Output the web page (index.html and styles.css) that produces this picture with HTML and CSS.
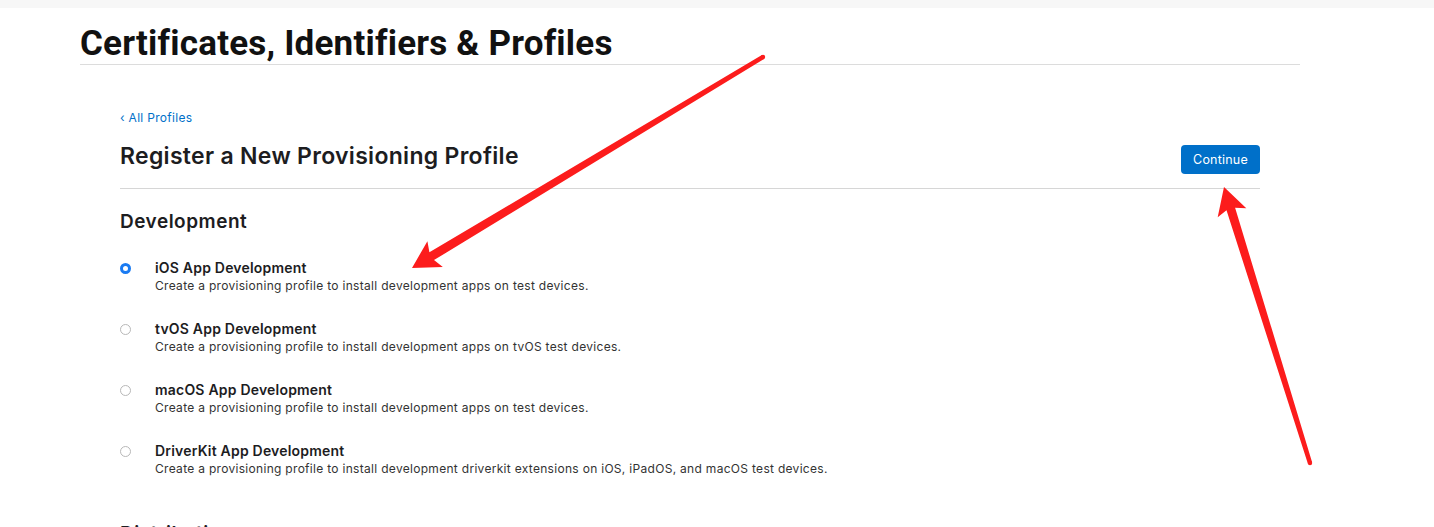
FILE: index.html
```html
<!DOCTYPE html>
<html lang="en">
<head>
    <meta charset="UTF-8">
    <meta name="viewport" content="width=device-width, initial-scale=1.0">
    <title>Certificates, Identifiers &amp; Profiles</title>
    <link rel="stylesheet" href="styles.css">
</head>
<body>
    <div class="topbar"></div>

    <main class="page">
        <h1 class="page-title">Certificates, Identifiers &amp; Profiles</h1>

        <section class="content">
            <a class="back-link" href="#">&lsaquo; All Profiles</a>

            <div class="content-head">
                <h2>Register a New Provisioning Profile</h2>
                <button class="continue-btn">Continue</button>
            </div>

            <h3 class="group-title">Development</h3>

            <ul class="options">
                <li class="option">
                    <span class="radio checked"></span>
                    <div>
                        <div class="option-name">iOS App Development</div>
                        <div class="option-desc">Create a provisioning profile to install development apps on test devices.</div>
                    </div>
                </li>
                <li class="option">
                    <span class="radio"></span>
                    <div>
                        <div class="option-name">tvOS App Development</div>
                        <div class="option-desc">Create a provisioning profile to install development apps on tvOS test devices.</div>
                    </div>
                </li>
                <li class="option">
                    <span class="radio"></span>
                    <div>
                        <div class="option-name">macOS App Development</div>
                        <div class="option-desc">Create a provisioning profile to install development apps on test devices.</div>
                    </div>
                </li>
                <li class="option">
                    <span class="radio"></span>
                    <div>
                        <div class="option-name">DriverKit App Development</div>
                        <div class="option-desc">Create a provisioning profile to install development driverkit extensions on iOS, iPadOS, and macOS test devices.</div>
                    </div>
                </li>
            </ul>

            <h3 class="group-title">Distribution</h3>
        </section>
    </main>

    <!-- screenshot annotations -->
    <svg class="arrows" width="1434" height="527" viewBox="0 0 1434 527">
        <polygon points="412,268 442.8,267 434,260.1 764.1,58.9 761.9,55.1 429.4,252.3 427.4,241.2" />
        <circle cx="763" cy="57" r="2.2" />
        <polygon points="1224,187 1246.3,208.3 1235.1,207.7 1312.1,462.3 1307.9,463.7 1226.5,210.3 1217.7,217.3" />
        <circle cx="1310" cy="463" r="2.2" />
    </svg>
</body>
</html>
```

FILE: styles.css
```css
* {
    margin: 0;
    padding: 0;
    box-sizing: border-box;
}

body {
    font-family: Inter, 'Liberation Sans', sans-serif;
    background: #fff;
    color: #1d1d1f;
    overflow: hidden;
}

.topbar {
    height: 8px;
    background: #f7f7f7;
}

.page {
    width: 1220px;
    margin-left: 80px;
}

.page-title {
    font-family: Roboto, 'Liberation Sans', sans-serif;
    font-size: 35px;
    font-weight: 700;
    color: #111;
    line-height: 40px;
    padding-top: 16px;
    border-bottom: 1px solid #dcdcdc;
    letter-spacing: 0.2px;
}

.content {
    padding: 0 40px;
}

.back-link {
    display: inline-block;
    margin-top: 45px;
    font-size: 12px;
    line-height: 16px;
    color: #0070c9;
    text-decoration: none;
    letter-spacing: 0.3px;
}

.content-head {
    display: flex;
    justify-content: space-between;
    align-items: center;
    margin-top: 11px;
    padding-bottom: 14px;
    border-bottom: 1px solid #d6d6d6;
}

.content-head h2 {
    font-size: 23px;
    font-weight: 600;
    line-height: 30px;
    color: #1d1d1f;
    letter-spacing: 0.3px;
}

.continue-btn {
    font-family: Inter, 'Liberation Sans', sans-serif;
    background: #0070c9;
    color: #fff;
    border: none;
    border-radius: 4px;
    font-size: 12.5px;
    letter-spacing: 0.2px;
    width: 79px;
    height: 29px;
    margin-top: 8px;
}

.group-title {
    font-size: 19px;
    font-weight: 600;
    line-height: 24px;
    margin-top: 21px;
    color: #1d1d1f;
    letter-spacing: 0.5px;
}

.options {
    list-style: none;
    margin-top: 25px;
}

.option {
    display: flex;
    gap: 24px;
    height: 61px;
}

.option-name {
    font-size: 14px;
    font-weight: 600;
    line-height: 18px;
    color: #1d1d1f;
    letter-spacing: 0.2px;
}

.option-desc {
    font-size: 12px;
    line-height: 18px;
    color: #333;
    letter-spacing: 0.3px;
}

.radio {
    width: 11px;
    height: 11px;
    margin-top: 4px;
    border-radius: 50%;
    border: 1px solid #b8b8b8;
    background: #fff;
    flex-shrink: 0;
}

.radio.checked {
    border: 3px solid #1a7bf2;
    background: #fff;
}

.options + .group-title {
    margin-top: 19px;
}

.arrows {
    position: absolute;
    left: 0;
    top: 0;
    fill: #fc1c1c;
    pointer-events: none;
}
```
